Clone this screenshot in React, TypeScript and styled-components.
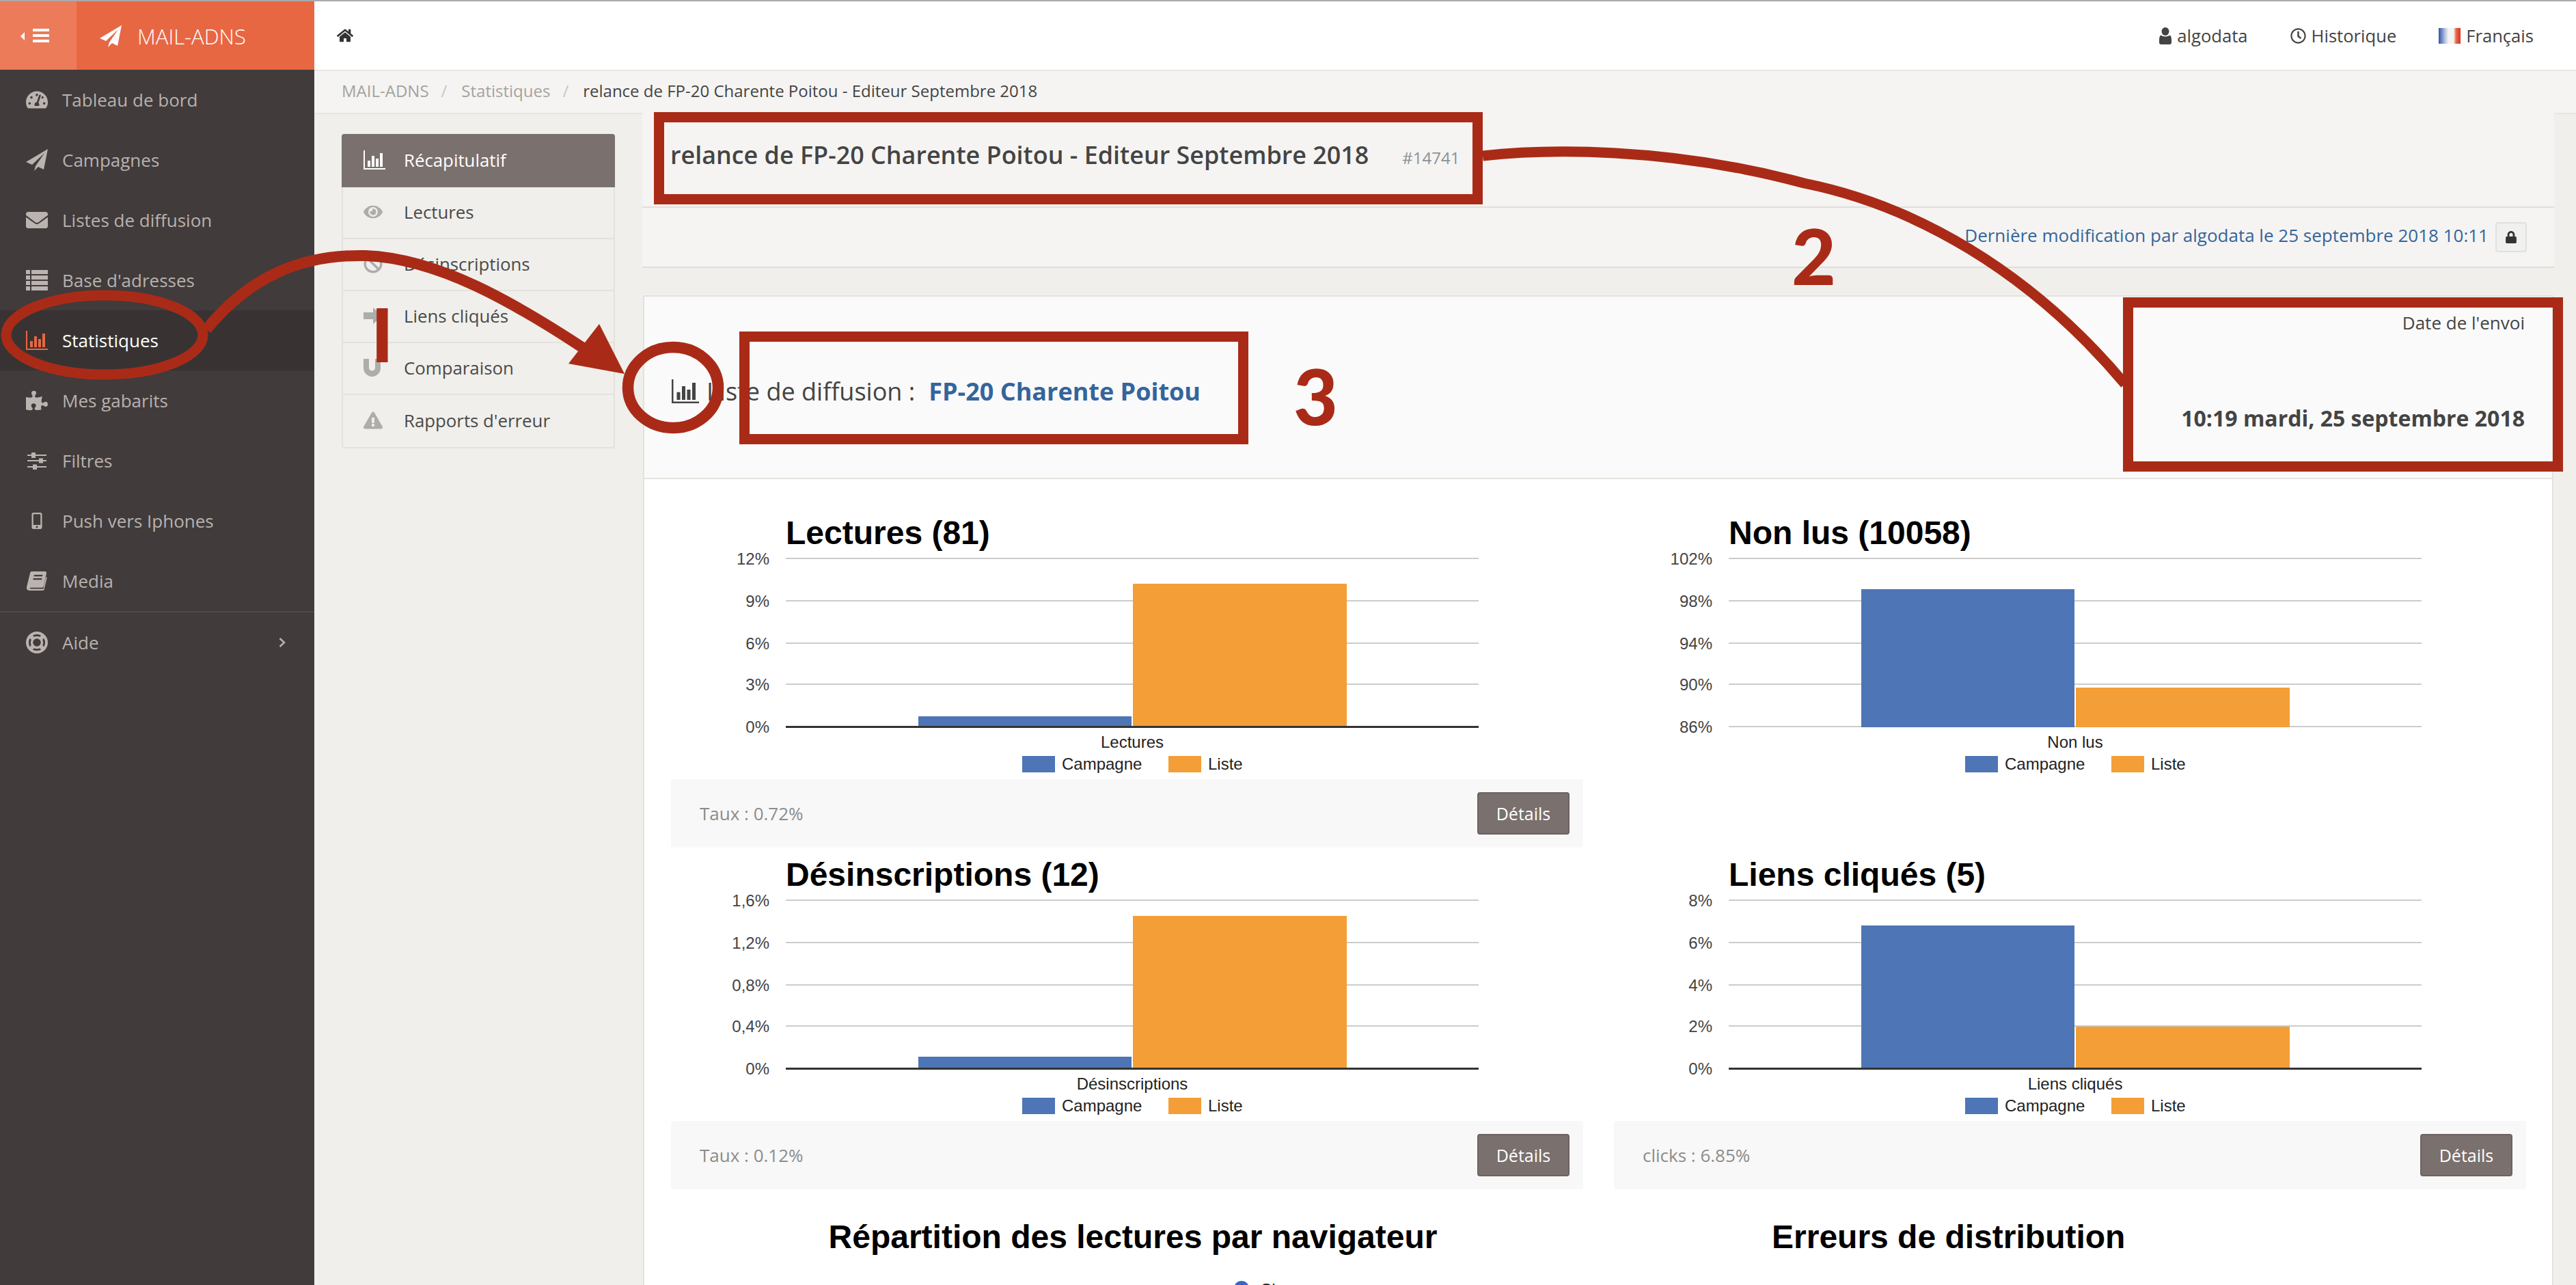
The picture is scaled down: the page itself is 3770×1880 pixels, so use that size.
import React from 'react';
import styled, { createGlobalStyle } from 'styled-components';
import {
  FaHome, FaTachometerAlt, FaEnvelope, FaPuzzlePiece, FaMobileAlt,
  FaEye, FaBan, FaExclamationTriangle, FaRegClock, FaLock,
} from 'react-icons/fa';

const Global = createGlobalStyle`
  html, body { margin: 0; padding: 0; background: #f0efeb; }
  * { box-sizing: border-box; }
`;

const Page = styled.div`
  position: relative; width: 3770px; height: 1880px; overflow: hidden;
  font-family: "Open Sans", "Liberation Sans", sans-serif; color: #444; background: #f0efeb;
`;
const TopBar = styled.header`
  display: flex; height: 104px; background: #fff; border-top: 2px solid #aaa; border-bottom: 2px solid #e6e6e4;
`;
const Toggle = styled.div`
  width: 112px; margin-bottom: -2px; background: #ec7b5a; display: flex; align-items: center; justify-content: center; padding-right: 10px;
`;
const Brand = styled.div`
  width: 348px; margin-bottom: -2px; background: #e86743; color: #fff; display: flex; align-items: center; gap: 23px; padding-left: 34px;
  font-size: 31px; font-weight: 300;
`;
const TopNav = styled.div`
  flex: 1; display: flex; align-items: center; justify-content: space-between; padding: 0 62px 0 33px; font-size: 25.6px; color: #444;
`;
const TopLinks = styled.div`display: flex; align-items: center; gap: 62px;`;
const TopLink = styled.span`display: inline-flex; align-items: center; gap: 8px;`;
const Layout = styled.div`display: flex; height: 1776px;`;
const Sidebar = styled.nav`
  width: 460px; margin-top: -2px; flex: none; background: #413b3b; display: flex; flex-direction: column; align-self: stretch;
`;
const NavItem = styled.div<{ $active?: boolean; $sep?: boolean }>`
  height: 88px; flex: none; display: flex; align-items: center; padding-left: 38px; gap: 21px; font-size: 26px;
  color: ${p => (p.$active ? '#fff' : '#b8b1ae')};
  background: ${p => (p.$active ? '#383332' : 'transparent')};
  ${p => (p.$sep ? 'border-top: 2px solid #4e4848; height: 90px;' : '')}
`;
const NavIcon = styled.span<{ $active?: boolean }>`
  width: 32px; flex: none; display: flex; justify-content: center; align-items: center; font-size: 32px;
  color: ${p => (p.$active ? '#e86743' : '#bab3b0')};
`;
const NavCaret = styled.svg`margin-left: auto; margin-right: 42px; flex: none;`;
const Main = styled.main`flex: 1; min-width: 0; display: flex; flex-direction: column;`;
const Breadcrumb = styled.div`
  height: 61px; flex: none; background: #f5f4f2; display: flex; align-items: center; padding: 0 0 4px 40px; font-size: 24px; color: #aaa7a2;
`;
const Crumb = styled.span<{ $current?: boolean }>`color: ${p => (p.$current ? '#444' : '#a5a29d')};`;
const CrumbSep = styled.span`color: #c9c7c3; margin: 0 21px 0 18px;`;
const Body = styled.div`flex: 1; display: flex; border-top: 2px solid #e6e5e1; padding-left: 40px; gap: 40px; min-height: 0;`;
const SubNav = styled.div`
  width: 400px; flex: none; margin-top: 29px; align-self: flex-start; border: 2px solid #e3e2de; border-top: 0; border-radius: 4px; background: #f0efeb;
`;
const SubItem = styled.div<{ $active?: boolean }>`
  height: ${p => (p.$active ? 78 : 76)}px; display: flex; align-items: center; padding-bottom: 3px; font-size: 25.8px;
  margin: ${p => (p.$active ? '0 -2px 0' : '0')};
  padding-left: ${p => (p.$active ? 32 : 30)}px;
  color: ${p => (p.$active ? '#fff' : '#4a4a4a')};
  background: ${p => (p.$active ? '#7a706d' : 'transparent')};
  border-radius: ${p => (p.$active ? '4px 4px 0 0' : '0')};
  border-bottom: ${p => (p.$active ? '0' : '2px solid #e3e2de')};
  &:last-child { border-bottom: 0; }
`;
const SubIcon = styled.span<{ $active?: boolean }>`
  width: 59px; flex: none; display: flex; align-items: center; font-size: 28px; color: ${p => (p.$active ? '#fff' : '#adadab')};
`;
const Content = styled.div`width: 2798px; flex: none; display: flex; flex-direction: column; margin-top: -2px;`;
const TitleBar = styled.div`
  height: 139px; flex: none; background: #f5f4f2; border-bottom: 2px solid #dfdedb; display: flex; align-items: baseline; padding: 37px 0 0 41px;
`;
const Title = styled.h1`margin: 0; font-size: 35.9px; font-weight: 600; color: #444;`;
const TitleId = styled.span`margin-left: 49px; font-size: 24px; color: #8a9299;`;
const ModBar = styled.div`
  height: 88px; flex: none; background: #f5f4f2; border-bottom: 2px solid #dfdedb; display: flex; align-items: center; justify-content: flex-end; gap: 10px; padding: 0 40px 0 0;
  font-size: 26px; color: #34659b;
`;
const ModText = styled.span`margin-bottom: 6px;`;
const LockBtn = styled.span`
  width: 46px; height: 44px; background: #f0f0ee; border: 2px solid #e0e0dd; border-radius: 4px; display: flex; align-items: center; justify-content: center; color: #333; font-size: 18px;
`;
const Panel = styled.section`
  margin: 40px 1px 0; flex: 1; min-height: 0; background: #fff; border: 2px solid #e3e2de; border-bottom: 0;
`;
const PanelHead = styled.div`
  height: 267px; background: #fafafa; border-bottom: 2px solid #e3e2de; display: flex; justify-content: space-between;
`;
const PanelTitle = styled.div`display: flex; align-items: center; gap: 11px; padding: 12px 0 0 40px; font-size: 36px; color: #444;`;
const ListLink = styled.strong`color: #34659b; font-weight: 700; margin-left: 20px;`;
const SendInfo = styled.div`
  display: flex; flex-direction: column; align-items: flex-end; justify-content: space-between; padding: 20px 40px 66px 0;
`;
const SendLabel = styled.span`font-size: 26px; color: #444;`;
const SendDate = styled.strong`font-size: 32px; font-weight: 700; color: #444;`;
const Charts = styled.div`
  display: grid; grid-template-columns: 1335px 1335px; column-gap: 45px; padding: 39px 0 0 39px;
`;
const Card = styled.div`height: 500px; display: flex; flex-direction: column;`;
const ChartSvg = styled.svg`display: block; flex: none; font-family: "Liberation Sans", Arial, sans-serif;`;
const CardFoot = styled.div`
  height: 100px; flex: none; background: #f8f8f8; border-radius: 4px; display: flex; align-items: center; justify-content: space-between; padding: 0 20px 0 42px;
  font-size: 26px; color: #8c8c8c;
`;
const DetailBtn = styled.span`
  width: 135px; height: 62px; background: #7a706d; border: 2px solid #6c6260; border-radius: 4px; color: #fff; display: flex; align-items: center; justify-content: center; font-size: 25px;
`;
const Overlay = styled.svg`position: absolute; left: 0; top: 0; pointer-events: none; font-family: Lato, "Open Sans", sans-serif;`;

const Plane = ({ s = 32 }: { s?: number }) => (
  <svg width={s} height={s} viewBox="0 0 32 32" fill="currentColor">
    <path d="M32 0 0 19l9 4L27 6 14 25l-2 7 6-6 8 4z" />
  </svg>
);
const Bars = ({ w = 32, h = 28 }: { w?: number; h?: number }) => (
  <svg width={w} height={h} viewBox="0 0 32 28" fill="currentColor">
    <path d="M0 0h2v26h30v2H0zM6 15h4v9H6zM12 8h4v16h-4zM18 12h4v12h-4zM24 4h4v20h-4z" />
  </svg>
);
const ListIco = () => (
  <svg width={32} height={32} viewBox="0 0 32 32" fill="currentColor">
    <path d="M0 1h6v6H0zM8 1h24v6H8zM0 9h6v6H0zM8 9h24v6H8zM0 17h6v6H0zM8 17h24v6H8zM0 25h6v6H0zM8 25h24v6H8z" />
  </svg>
);
const Sliders = () => (
  <svg width={28} height={25} viewBox="0 0 28 25" fill="currentColor">
    <path d="M0 3h28v2H0zM0 11h28v2H0zM0 20h28v2H0zM6 0h6v8H6zM17 8.500h6v7h-6zM8 17.500h6v7.500H8z" />
  </svg>
);
const BookIco = () => (
  <svg width={30} height={28} viewBox="0 0 30 28" fill="currentColor" fillRule="evenodd">
    <path d="M7 0h20a2 2 0 0 1 2 2.500L25 21.500a3 3 0 0 1-3 2.200H6c-1.800 0-1.800 1.700 0 1.700h18.500L28.300 8l1.500 1-4 17c-.3 1.200-1 2-2.300 2H4.500C1.500 28-.4 26-.1 23.500L5 2.500C5.300 1 6 0 7 0zM11 5l-.5 2.300H23L23.500 5zM9.800 10l-.5 2.300H22l.5-2.300z" />
  </svg>
);
const Ring = () => (
  <svg width={32} height={32} viewBox="0 0 32 32" fill="none" stroke="currentColor">
    <circle cx={16} cy={16} r={14} strokeWidth={4} />
    <circle cx={16} cy={16} r={7.500} strokeWidth={3.500} />
    <path d="M6 6l5 5M26 6l-5 5M6 26l5-5M26 26l-5-5" strokeWidth={6} />
  </svg>
);
const ChunkyArrow = () => (
  <svg width={28} height={24} viewBox="0 0 28 24" fill="currentColor">
    <path d="M0 7h14V0l14 12-14 12v-7H0z" />
  </svg>
);
const MagnetU = () => (
  <svg width={25} height={26} viewBox="0 0 25 26" fill="currentColor">
    <path d="M0 0h8v13a4.500 4.500 0 0 0 9 0V0h8v13.500a12.500 12.500 0 0 1-25 0z" />
  </svg>
);
const UserIco = () => (
  <svg width={18} height={25} viewBox="0 0 18 25" fill="currentColor">
    <ellipse cx={9} cy={6} rx={5.500} ry={6} />
    <path d="M2.500 11.500C5 14 13 14 15.500 11.500 17.500 12.500 18 15 18 19v3c0 2-1 3-3 3H3c-2 0-3-1-3-3v-3c0-4 .5-6.500 2.500-7.500z" />
  </svg>
);
const Flag = () => (
  <svg width={32} height={23} viewBox="0 0 32 23">
    <defs>
      <linearGradient id="fr" x1="0" x2="1" y1="0" y2="0">
        <stop offset="0" stopColor="#2f55a4" />
        <stop offset=".3" stopColor="#b9c6e4" />
        <stop offset=".45" stopColor="#f4f4f4" />
        <stop offset=".68" stopColor="#f4f4f4" />
        <stop offset=".8" stopColor="#e8674f" />
        <stop offset="1" stopColor="#d8321f" />
      </linearGradient>
    </defs>
    <rect width="32" height="23" fill="url(#fr)" />
  </svg>
);

type ChartDef = {
  title: string; ticks: string[]; blue: number; orange: number; label: string; foot?: string; flat?: boolean;
};
const GRID = [77, 139, 201, 261, 323];
const charts: ChartDef[] = [
  { title: 'Lectures (81)', ticks: ['12%', '9%', '6%', '3%', '0%'], blue: 308, orange: 114, label: 'Lectures', foot: 'Taux : 0.72%' },
  { title: 'Non lus (10058)', ticks: ['102%', '98%', '94%', '90%', '86%'], blue: 122, orange: 266, label: 'Non lus', flat: true },
  { title: 'Désinscriptions (12)', ticks: ['1,6%', '1,2%', '0,8%', '0,4%', '0%'], blue: 306, orange: 100, label: 'Désinscriptions', foot: 'Taux : 0.12%' },
  { title: 'Liens cliqués (5)', ticks: ['8%', '6%', '4%', '2%', '0%'], blue: 114, orange: 262, label: 'Liens cliqués', foot: 'clicks : 6.85%' },
];

const Chart = ({ c }: { c: ChartDef }) => {
  const base = c.flat ? 324 : 323;
  return (
    <ChartSvg width={1335} height={400} viewBox="0 0 1335 400">
      <text x={168} y={56} fontSize={48} fontWeight={700} fill="#000">{c.title}</text>
      {GRID.map((y, i) => (
        <React.Fragment key={y}>
          <rect x={168} y={y - 1} width={1014} height={2} fill="#ccc" />
          <text x={144} y={y + 9} fontSize={24} textAnchor="end" fill="#444">{c.ticks[i]}</text>
        </React.Fragment>
      ))}
      <rect x={362} y={c.blue} width={312} height={base - c.blue} fill="#4e75b5" />
      <rect x={676} y={c.orange} width={313} height={base - c.orange} fill="#f49e37" />
      {!c.flat && <rect x={168} y={322} width={1014} height={3} fill="#333" />}
      <text x={675} y={354} fontSize={24} textAnchor="middle" fill="#222">{c.label}</text>
      <rect x={514} y={366} width={48} height={24} fill="#4e75b5" />
      <text x={572} y={386} fontSize={24} fill="#222">Campagne</text>
      <rect x={728} y={366} width={48} height={24} fill="#f49e37" />
      <text x={786} y={386} fontSize={24} fill="#222">Liste</text>
    </ChartSvg>
  );
};

const sideItems: { icon: React.ReactNode; label: string; active?: boolean; sep?: boolean; caret?: boolean }[] = [
  { icon: <FaTachometerAlt />, label: 'Tableau de bord' },
  { icon: <Plane />, label: 'Campagnes' },
  { icon: <FaEnvelope />, label: 'Listes de diffusion' },
  { icon: <ListIco />, label: "Base d'adresses" },
  { icon: <Bars w={36} h={32} />, label: 'Statistiques', active: true },
  { icon: <FaPuzzlePiece />, label: 'Mes gabarits' },
  { icon: <Sliders />, label: 'Filtres' },
  { icon: <FaMobileAlt size={24} />, label: 'Push vers Iphones' },
  { icon: <BookIco />, label: 'Media' },
  { icon: <Ring />, label: 'Aide', sep: true, caret: true },
];
const subItems: { icon: React.ReactNode; label: string; active?: boolean }[] = [
  { icon: <Bars />, label: 'Récapitulatif', active: true },
  { icon: <FaEye />, label: 'Lectures' },
  { icon: <FaBan />, label: 'Désinscriptions' },
  { icon: <ChunkyArrow />, label: 'Liens cliqués' },
  { icon: <MagnetU />, label: 'Comparaison' },
  { icon: <FaExclamationTriangle />, label: "Rapports d'erreur" },
];

const RED = '#a92b17';

export default function App() {
  return (
    <Page>
      <Global />
      <TopBar>
        <Toggle>
          <svg width={42} height={22} viewBox="0 0 42 22" fill="#fff">
            <path d="M6 5v12L0 11zM18 0h24v4H18zM18 8h24v4H18zM18 16h24v4H18z" />
          </svg>
        </Toggle>
        <Brand>
          <Plane />
          <span>MAIL-ADNS</span>
        </Brand>
        <TopNav>
          <FaHome size={24} color="#333" />
          <TopLinks>
            <TopLink><UserIco />algodata</TopLink>
            <TopLink><FaRegClock size={23} />Historique</TopLink>
            <TopLink><Flag />Français</TopLink>
          </TopLinks>
        </TopNav>
      </TopBar>
      <Layout>
        <Sidebar>
          {sideItems.map(it => (
            <NavItem key={it.label} $active={it.active} $sep={it.sep}>
              <NavIcon $active={it.active}>{it.icon}</NavIcon>
              <span>{it.label}</span>
              {it.caret && (
                <NavCaret width={10} height={14} viewBox="0 0 10 14" fill="none" stroke="#b8b1ae" strokeWidth={2.500}>
                  <path d="M1.500 1 8 7l-6.500 6" />
                </NavCaret>
              )}
            </NavItem>
          ))}
        </Sidebar>
        <Main>
          <Breadcrumb>
            <Crumb>MAIL-ADNS</Crumb><CrumbSep>/</CrumbSep>
            <Crumb>Statistiques</Crumb><CrumbSep>/</CrumbSep>
            <Crumb $current>relance de FP-20 Charente Poitou - Editeur Septembre 2018</Crumb>
          </Breadcrumb>
          <Body>
            <SubNav>
              {subItems.map(it => (
                <SubItem key={it.label} $active={it.active}>
                  <SubIcon $active={it.active}>{it.icon}</SubIcon>
                  <span>{it.label}</span>
                </SubItem>
              ))}
            </SubNav>
            <Content>
              <TitleBar>
                <Title>relance de FP-20 Charente Poitou - Editeur Septembre 2018</Title>
                <TitleId>#14741</TitleId>
              </TitleBar>
              <ModBar>
                <ModText>Dernière modification par algodata le 25 septembre 2018 10:11</ModText>
                <LockBtn><FaLock /></LockBtn>
              </ModBar>
              <Panel>
                <PanelHead>
                  <PanelTitle>
                    <Bars w={40} h={35} />
                    <span>Liste de diffusion :<ListLink>FP-20 Charente Poitou</ListLink></span>
                  </PanelTitle>
                  <SendInfo>
                    <SendLabel>Date de l'envoi</SendLabel>
                    <SendDate>10:19 mardi, 25 septembre 2018</SendDate>
                  </SendInfo>
                </PanelHead>
                <Charts>
                  {charts.map(c => (
                    <Card key={c.title}>
                      <Chart c={c} />
                      {c.foot && (
                        <CardFoot>
                          <span>{c.foot}</span>
                          <DetailBtn>Détails</DetailBtn>
                        </CardFoot>
                      )}
                    </Card>
                  ))}
                  <ChartSvg width={1335} height={160} viewBox="0 0 1335 160">
                    <text x={676} y={86} fontSize={48} fontWeight={700} fill="#000" textAnchor="middle">Répartition des lectures par navigateur</text>
                    <circle cx={835} cy={145} r={11} fill="#3366cc" />
                    <text x={862} y={155} fontSize={24} fill="#222">Chrome</text>
                  </ChartSvg>
                  <ChartSvg width={1335} height={160} viewBox="0 0 1335 160">
                    <text x={231} y={86} fontSize={48} fontWeight={700} fill="#000">Erreurs de distribution</text>
                  </ChartSvg>
                </Charts>
              </Panel>
            </Content>
          </Body>
        </Main>
      </Layout>
      <Overlay width={3770} height={1880} viewBox="0 0 3770 1880" fill="none">
        <ellipse cx={153} cy={490} rx={144} ry={58} stroke={RED} strokeWidth={15} />
        <path d="M302 482C365 405 440 372 535 374 640 378 750 440 870 520" stroke={RED} strokeWidth={16} />
        <path d="M914 547 877 474 832 532z" fill={RED} />
        <text x={543} y={530} fontSize={108} fontWeight={900} fill={RED}>I</text>
        <ellipse cx={985} cy={567} rx={66} ry={59} stroke={RED} strokeWidth={16.500} />
        <rect x={964.500} y={171.500} width={1198} height={120} stroke={RED} strokeWidth={15} />
        <path d="M2170 228C2260 218 2440 214 2640 268 2800 300 2970 395 3110 562" stroke={RED} strokeWidth={15} />
        <text x={2622} y={417} fontSize={112} fontWeight={900} fill={RED}>2</text>
        <rect x={1089.500} y={492.500} width={730} height={150} stroke={RED} strokeWidth={15} />
        <text x={1893} y={622} fontSize={112} fontWeight={900} fill={RED}>3</text>
        <rect x={3114.500} y={442.500} width={629} height={240} stroke={RED} strokeWidth={15} />
      </Overlay>
    </Page>
  );
}
